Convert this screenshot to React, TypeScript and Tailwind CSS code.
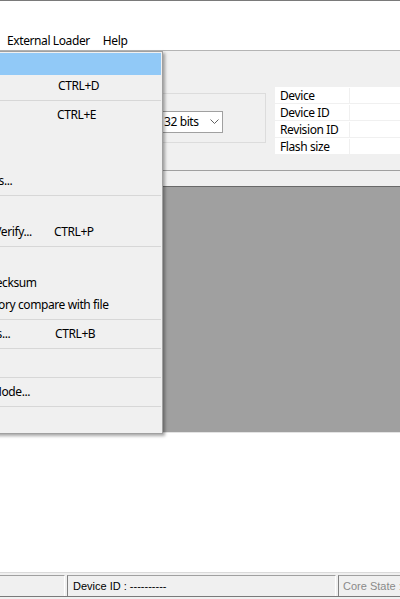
import React from "react";

type Item =
  | { kind: "item"; label: string; shortcut?: string; sc?: string; active?: boolean }
  | { kind: "sep" };

const items: Item[] = [
  { kind: "item", label: "Connect", active: true },
  { kind: "item", label: "Disconnect", shortcut: "CTRL+D", sc: "pl-[156px]" },
  { kind: "sep" },
  { kind: "item", label: "Erase Chip", shortcut: "CTRL+E", sc: "pl-[155px]" },
  { kind: "item", label: "Erase Bank1" },
  { kind: "item", label: "Erase Bank2" },
  { kind: "item", label: "Erase Sectors..." },
  { kind: "sep" },
  { kind: "item", label: "Program..." },
  { kind: "item", label: "Program & Verify...", shortcut: "CTRL+P", sc: "pl-[152px]" },
  { kind: "sep" },
  { kind: "item", label: "Blank Check" },
  { kind: "item", label: "Memory Checksum" },
  { kind: "item", label: "Target memory compare with file" },
  { kind: "sep" },
  { kind: "item", label: "Option Bytes...", shortcut: "CTRL+B", sc: "pl-[153px]" },
  { kind: "sep" },
  { kind: "item", label: "MCU Core" },
  { kind: "sep" },
  { kind: "item", label: "Automatic Mode..." },
  { kind: "sep" },
  { kind: "item", label: "Settings..." },
];

const rows = [
  { name: "Device" },
  { name: "Device ID" },
  { name: "Revision ID" },
  { name: "Flash size" },
];

export default function App() {
  return (
    <div className="relative w-[400px] h-[599px] overflow-hidden bg-white text-[12px] leading-none text-black font-['Noto_Sans',sans-serif] tracking-[-0.4px]">
      {/* window top edge */}
      <div className="h-px bg-[#7a7a7a]" />
      <div className="h-[31px] bg-white" />

      {/* menu bar */}
      <div className="h-[18px] flex items-center bg-white">
        <span className="ml-[7px]">External Loader</span>
        <span className="ml-[13px]">Help</span>
      </div>

      {/* toolbar / info area */}
      <div className="h-[120px] border-t border-[#b4b4b4] bg-[#f0f0f0] flex items-start">
        <div className="shrink-0 ml-[100px] mt-[42px] w-[166px] h-[50px] border border-[#dcdcdc]">
          <div className="ml-[49px] mt-[17px] w-[73px] h-[22px] border border-[#a0a0a0] bg-white flex items-center justify-between">
            <span className="pl-[13px]">32 bits</span>
            <svg width="9" height="6" viewBox="0 0 9 6" className="mr-[3px]">
              <polyline points="0.5,0.5 4.5,4.5 8.5,0.5" fill="none" stroke="#606060" strokeWidth="1" />
            </svg>
          </div>
        </div>
        <div className="shrink-0 ml-[9px] mt-[36px] w-[140px] bg-white flex flex-col">
          {rows.map((r) => (
            <div key={r.name} className="h-[17px] flex border-b border-[#f0f0f0] pt-px">
              <div className="shrink-0 w-[75px] border-r border-[#f0f0f0] pl-[5px] flex items-center">{r.name}</div>
              <div className="flex-1" />
            </div>
          ))}
        </div>
      </div>

      {/* strip */}
      <div className="h-[16px] border-t border-[#a0a0a0] bg-[#f0f0f0]" />

      {/* workspace */}
      <div className="h-[246px] border-t border-[#696969] bg-[#a0a0a0]" />

      {/* white area */}
      <div className="h-[140px] border-t border-[#e3e3e3] bg-white" />

      {/* status bar */}
      <div className="h-[27px] border-t border-[#dadada] bg-[#f0f0f0] pt-[2px] font-['Liberation_Sans',sans-serif] text-[11px] tracking-normal">
        <div className="flex gap-[2px] h-[22px] border-b border-[#7a7a7a]">
          <div className="shrink-0 w-[65px] border-t border-r border-t-[#a0a0a0] border-r-white" />
          <div className="shrink-0 w-[269px] border-t border-l border-r border-t-[#a0a0a0] border-l-[#808080] border-r-white flex items-center pl-[5px] whitespace-nowrap">
            Device ID : ----------
          </div>
          <div className="shrink-0 w-[80px] border-t border-l border-t-[#a0a0a0] border-l-[#808080] flex items-center pl-[4px] text-[#8a8a8a] whitespace-nowrap">
            Core State :
          </div>
        </div>
      </div>

      {/* open Target menu */}
      <div className="absolute top-[51px] left-[-100px] w-[263px] border border-[#a0a0a0] bg-[#f0f0f0] p-px shadow-[2px_2px_3px_rgba(0,0,0,0.35)]">
        {items.map((it, i) =>
          it.kind === "sep" ? (
            <div key={i} className="h-[7px] flex items-center">
              <div className="ml-[30px] flex-1 h-px bg-[#d7d7d7]" />
            </div>
          ) : (
            <div
              key={i}
              className={`relative h-[22px] flex items-center ${it.active ? "bg-[#91c9f7]" : ""}`}
            >
              <span className="absolute left-[32px] whitespace-nowrap">{it.label}</span>
              {it.shortcut && <span className={`absolute left-0 whitespace-nowrap ${it.sc}`}>{it.shortcut}</span>}
            </div>
          )
        )}
      </div>
    </div>
  );
}
